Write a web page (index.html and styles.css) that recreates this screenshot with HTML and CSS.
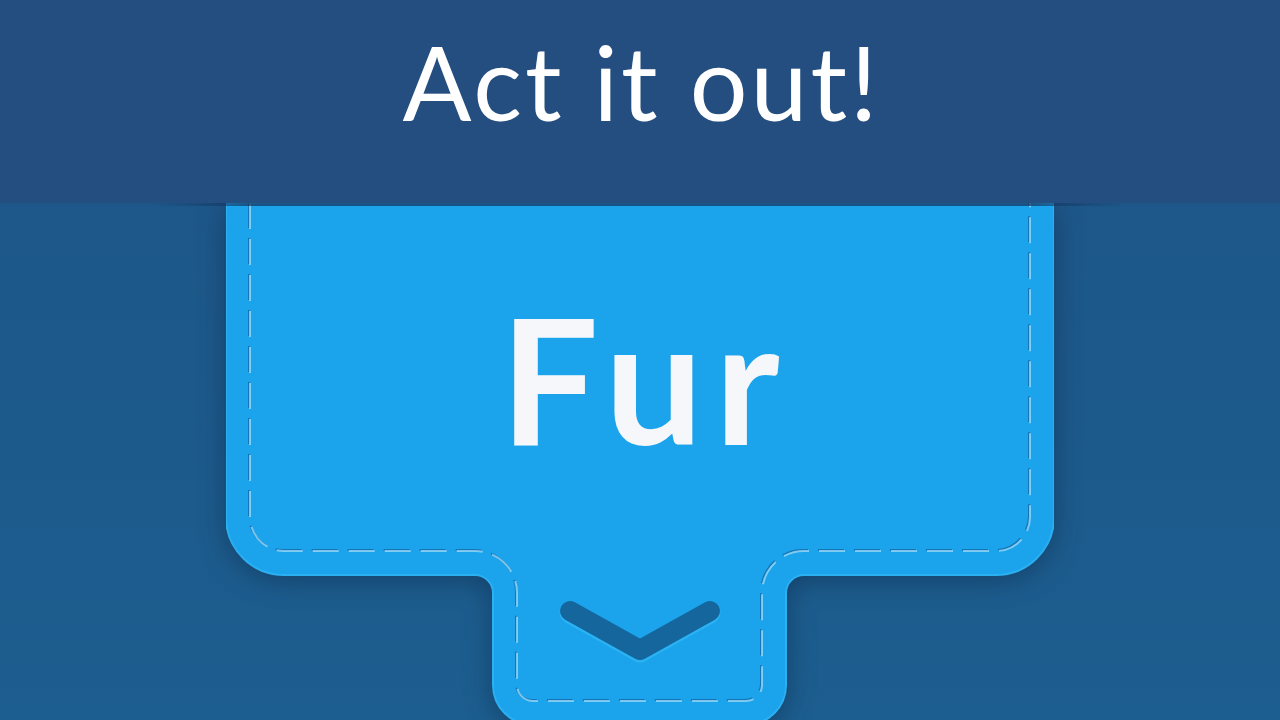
FILE: index.html
```html
<!DOCTYPE html>
<html lang="en">
<head>
    <meta charset="UTF-8">
    <meta name="viewport" content="width=device-width, initial-scale=1.0">
    <title>Act it out!</title>
    <link rel="stylesheet" href="styles.css">
</head>
<body>
    <div class="header">
        <h1>Act it out!</h1>
    </div>
    <div class="stage">
        <div class="card">
            <svg class="card-bg" width="828" height="530" viewBox="0 0 828 530">
                <path class="card-shape" d="M0,0 H828 V314 A58,58 0 0 1 770,372 H578 A18,18 0 0 0 560,390 V482 A40,40 0 0 1 520,522 H307 A40,40 0 0 1 267,482 V390 A18,18 0 0 0 249,372 H58 A58,58 0 0 1 0,314 Z"/>
                <path class="stitch-dark" d="M24,0 V314 A34,34 0 0 0 58,348 H249 A42,42 0 0 1 291,390 V482 A16,16 0 0 0 307,498 H520 A16,16 0 0 0 536,482 V390 A42,42 0 0 1 578,348 H770 A34,34 0 0 0 804,314 V0"/>
                <path class="stitch-light" d="M24,0 V314 A34,34 0 0 0 58,348 H249 A42,42 0 0 1 291,390 V482 A16,16 0 0 0 307,498 H520 A16,16 0 0 0 536,482 V390 A42,42 0 0 1 578,348 H770 A34,34 0 0 0 804,314 V0"/>
            </svg>
            <div class="word">Fur</div>
            <div class="tab">
                <svg class="chevron" width="170" height="72" viewBox="0 0 170 72">
                    <path class="chevron-edge" d="M15,16 L85,55 L155,16"/>
                    <path class="chevron-line" d="M15,14 L85,53 L155,14"/>
                </svg>
            </div>
        </div>
    </div>
</body>
</html>
```

FILE: styles.css
```css
body {
    margin: 0;
    padding: 0;
    height: 720px;
    overflow: hidden;
    font-family: Lato, "Open Sans", sans-serif;
    background: linear-gradient(#1e5487, #1c5e8f);
}
.header {
    position: relative;
    z-index: 2;
    height: 203px;
    display: flex;
    justify-content: center;
    background-color: #234e7f;
}
.header::after {
    content: "";
    position: absolute;
    left: 150px;
    right: 150px;
    bottom: -3px;
    height: 3px;
    background: linear-gradient(90deg, rgba(20, 50, 90, 0), rgba(20, 50, 90, 0.7) 10%, rgba(20, 50, 90, 0.7) 90%, rgba(20, 50, 90, 0));
}
.header h1 {
    margin: 22px 0 0;
    padding-left: 3px;
    font-size: 102px;
    font-weight: 400;
    line-height: 120px;
    color: #ffffff;
    letter-spacing: 3px;
}
.stage {
    display: flex;
    justify-content: center;
}
.card {
    position: relative;
    width: 828px;
    height: 517px;
    display: flex;
    flex-direction: column;
    align-items: center;
}
.card-bg {
    position: absolute;
    left: 0;
    top: 0;
    filter: drop-shadow(0 4px 14px rgba(8, 30, 60, 0.45));
}
.card-shape {
    fill: #1ba3eb;
    stroke: #2bb0f2;
    stroke-width: 2;
}
.stitch-dark {
    fill: none;
    stroke: rgba(14, 80, 140, 0.55);
    stroke-width: 2;
    stroke-dasharray: 26 10;
    transform: translate(-1px, -1px);
}
.stitch-light {
    fill: none;
    stroke: rgba(160, 220, 250, 0.75);
    stroke-width: 2;
    stroke-dasharray: 26 10;
}
.word {
    position: relative;
    height: 372px;
    display: flex;
    align-items: center;
    padding-bottom: 24px;
    padding-left: 12px;
    box-sizing: border-box;
    font-size: 174px;
    font-weight: 700;
    letter-spacing: 12px;
    color: #f5f7fa;
}
.tab {
    position: relative;
    padding-top: 22px;
}
.chevron-edge {
    fill: none;
    stroke: #2ab3f4;
    stroke-width: 21;
    stroke-linecap: round;
    stroke-linejoin: round;
}
.chevron-line {
    fill: none;
    stroke: #14669d;
    stroke-width: 20;
    stroke-linecap: round;
    stroke-linejoin: round;
}
```
